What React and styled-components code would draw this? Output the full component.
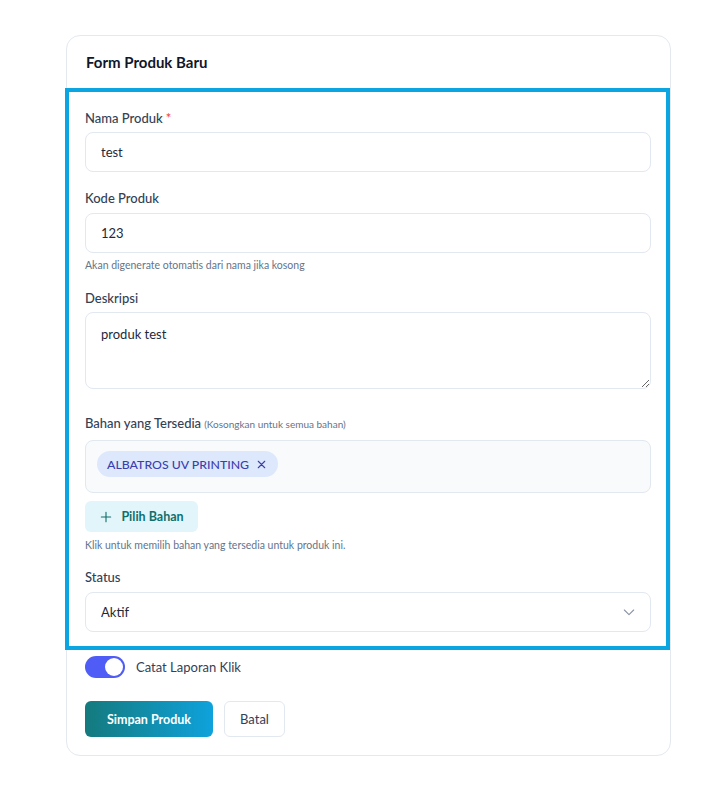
import React, { useState } from 'react'
import styled, { createGlobalStyle } from 'styled-components'

const GlobalStyle = createGlobalStyle`
  body {
    margin: 0;
    background: #ffffff;
    font-family: Lato, 'Noto Sans', sans-serif;
    color: #1e293b;
  }
`

const Page = styled.div`
  padding: 35px 0 34px 66px;
`

const Card = styled.div`
  box-sizing: border-box;
  width: 605px;
  border: 1px solid #e3e9ef;
  border-radius: 14px;
  background: #fff;
  padding-bottom: 18px;
`

const Header = styled.div`
  height: 52px;
  display: flex;
  align-items: center;
  padding: 0 19px;
`

const Title = styled.h2`
  margin: 0;
  font-size: 15px;
  font-weight: 700;
  color: #0f172a;
`

const Body = styled.div`
  margin: 0 0 0 -2px;
  border: 4px solid #0ba5e2;
  padding: 16px 15px 14px 16px;
`

const Field = styled.div`
  margin-bottom: ${({ gap }) => (gap === undefined ? 16 : gap)}px;
`

const Label = styled.label`
  display: block;
  font-size: 13px;
  line-height: 20px;
  font-weight: 500;
  color: #334155;
  margin-bottom: ${({ mb }) => mb || 4}px;
`

const Required = styled.span`
  color: #ef4444;
  margin-left: 3px;
`

const Hint = styled.span`
  font-size: 10px;
  font-weight: 400;
  color: #64748b;
  margin-left: 3px;
`

const Input = styled.input`
  display: block;
  box-sizing: border-box;
  width: 100%;
  height: 40px;
  border: 1px solid #e2e8f0;
  border-radius: 8px;
  padding: 0 15px;
  font-family: inherit;
  font-size: 13px;
  color: #1e293b;
  background: #fff;
  outline: none;
`

const TextArea = styled.textarea`
  display: block;
  box-sizing: border-box;
  width: 100%;
  height: 77px;
  border: 1px solid #e2e8f0;
  border-radius: 8px;
  padding: 12px 15px;
  font-family: inherit;
  font-size: 13px;
  line-height: 18px;
  color: #1e293b;
  resize: vertical;
  outline: none;
`

const Help = styled.div`
  font-size: 10.5px;
  line-height: 14px;
  color: #64748b;
  margin-top: ${({ mt }) => mt || 5}px;
`

const ChipBox = styled.div`
  box-sizing: border-box;
  min-height: 53px;
  border: 1px solid #e2e8f0;
  border-radius: 8px;
  background: #f8fafc;
  padding: 10px 11px;
  display: flex;
  flex-wrap: wrap;
  gap: 6px;
  align-items: flex-start;
`

const Chip = styled.span`
  display: inline-flex;
  align-items: center;
  gap: 6px;
  height: 26px;
  padding: 0 10px;
  border-radius: 13px;
  background: #dde8fc;
  color: #3b3fae;
  font-size: 12.3px;
  font-weight: 500;
`

const ChipRemove = styled.button`
  border: none;
  background: none;
  padding: 0;
  display: flex;
  color: #3b3fae;
  cursor: pointer;
`

const PickButton = styled.button`
  margin-top: 8px;
  height: 31px;
  width: 113px;
  display: inline-flex;
  align-items: center;
  justify-content: center;
  gap: 8px;
  border: none;
  border-radius: 6px;
  background: #e1f5fb;
  color: #0f6f6b;
  font-family: inherit;
  font-size: 12.5px;
  font-weight: 700;
  cursor: pointer;
`

const SelectWrap = styled.div`
  position: relative;
`

const Select = styled.select`
  display: block;
  box-sizing: border-box;
  width: 100%;
  height: 40px;
  border: 1px solid #e2e8f0;
  border-radius: 8px;
  padding: 0 15px;
  font-family: inherit;
  font-size: 13px;
  color: #1e293b;
  background: #fff;
  appearance: none;
  outline: none;
`

const Chevron = styled.svg`
  position: absolute;
  right: 14px;
  top: 12px;
  pointer-events: none;
`

const ToggleRow = styled.div`
  display: flex;
  align-items: center;
  gap: 11px;
  padding: 6px 18px 0;
`

const Switch = styled.button`
  position: relative;
  width: 40px;
  height: 22px;
  border: none;
  border-radius: 11px;
  background: ${({ on }) => (on ? '#4f5cf5' : '#cbd5e1')};
  padding: 0;
  cursor: pointer;
  &::after {
    content: '';
    position: absolute;
    top: 2px;
    left: ${({ on }) => (on ? '20px' : '2px')};
    width: 18px;
    height: 18px;
    border-radius: 50%;
    background: #fff;
    transition: left 0.2s;
  }
`

const ToggleLabel = styled.span`
  font-size: 13px;
  color: #334155;
`

const Actions = styled.div`
  display: flex;
  gap: 11px;
  padding: 23px 18px 0;
`

const PrimaryButton = styled.button`
  height: 36px;
  width: 128px;
  border: none;
  border-radius: 6px;
  background: linear-gradient(90deg, #147a7d 0%, #0ea2dc 100%);
  color: #fff;
  font-family: inherit;
  font-size: 12.5px;
  font-weight: 700;
  cursor: pointer;
`

const GhostButton = styled.button`
  height: 36px;
  width: 61px;
  border: 1px solid #e2e8f0;
  border-radius: 6px;
  background: #fff;
  color: #334155;
  font-family: inherit;
  font-size: 13px;
  cursor: pointer;
`

export default function App() {
  const [logClicks, setLogClicks] = useState(true)
  const [materials, setMaterials] = useState(['ALBATROS UV PRINTING'])

  return (
    <Page>
      <GlobalStyle />
      <Card>
        <Header>
          <Title>Form Produk Baru</Title>
        </Header>
        <Body>
          <Field>
            <Label>
              Nama Produk<Required>*</Required>
            </Label>
            <Input defaultValue="test" />
          </Field>
          <Field>
            <Label mb={5}>Kode Produk</Label>
            <Input defaultValue="123" />
            <Help>Akan digenerate otomatis dari nama jika kosong</Help>
          </Field>
          <Field gap={24}>
            <Label>Deskripsi</Label>
            <TextArea defaultValue="produk test" />
          </Field>
          <Field gap={15}>
            <Label mb={6}>
              Bahan yang Tersedia<Hint>(Kosongkan untuk semua bahan)</Hint>
            </Label>
            <ChipBox>
              {materials.map(m => (
                <Chip key={m}>
                  {m}
                  <ChipRemove onClick={() => setMaterials(materials.filter(x => x !== m))}>
                    <svg width="13" height="13" viewBox="0 0 24 24" fill="none" stroke="currentColor" strokeWidth="2" strokeLinecap="round">
                      <path d="M18 6 6 18M6 6l12 12" />
                    </svg>
                  </ChipRemove>
                </Chip>
              ))}
            </ChipBox>
            <PickButton>
              <svg width="14" height="14" viewBox="0 0 24 24" fill="none" stroke="currentColor" strokeWidth="1.9" strokeLinecap="round">
                <path d="M12 4v16M4 12h16" />
              </svg>
              Pilih Bahan
            </PickButton>
            <Help mt={6}>Klik untuk memilih bahan yang tersedia untuk produk ini.</Help>
          </Field>
          <Field gap={0}>
            <Label mb={5}>Status</Label>
            <SelectWrap>
              <Select defaultValue="aktif">
                <option value="aktif">Aktif</option>
                <option value="nonaktif">Nonaktif</option>
              </Select>
              <Chevron width="16" height="16" viewBox="0 0 24 24" fill="none" stroke="#8a94a6" strokeWidth="1.6" strokeLinecap="round" strokeLinejoin="round">
                <path d="m5 9 7 7 7-7" />
              </Chevron>
            </SelectWrap>
          </Field>
        </Body>
        <ToggleRow>
          <Switch on={logClicks ? 1 : 0} onClick={() => setLogClicks(!logClicks)} />
          <ToggleLabel>Catat Laporan Klik</ToggleLabel>
        </ToggleRow>
        <Actions>
          <PrimaryButton>Simpan Produk</PrimaryButton>
          <GhostButton>Batal</GhostButton>
        </Actions>
      </Card>
    </Page>
  )
}
